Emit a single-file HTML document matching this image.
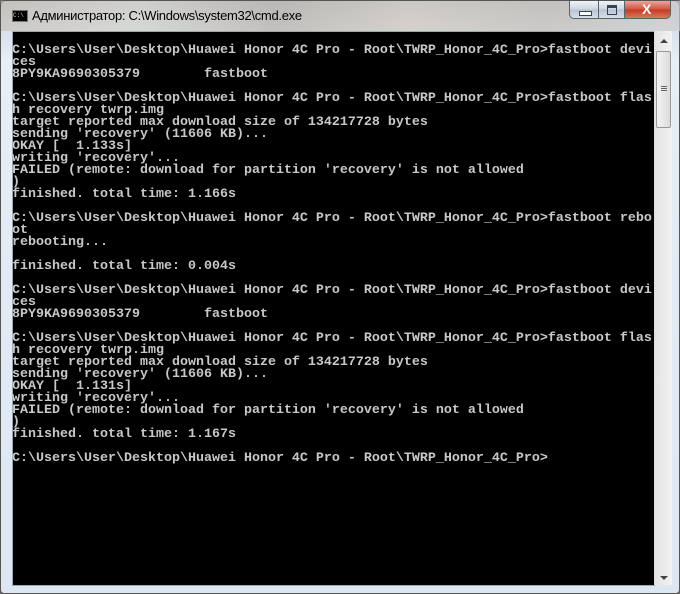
<!DOCTYPE html>
<html><head><meta charset="utf-8"><style>
html,body{margin:0;padding:0;width:680px;height:594px;overflow:hidden;background:#6a6a6a}
.win{position:absolute;left:0;top:0;width:678px;height:592px;border:1px solid #555;border-radius:6px 6px 4px 4px;
background:linear-gradient(180deg,rgba(200,210,220,.85) 0,rgba(222,232,243,.95) 30px,#e6eef7 60px,#dde7f2 100%)}
.tb{position:absolute;left:0;top:0;width:680px;height:30px;background:linear-gradient(90deg,#c9c2b8 0,#d8d4cc 20%,#b9b3ab 40%,#d4cbc1 60%,#c6c0b8 80%,#cfcfcf 100%);opacity:.7}
.title{position:absolute;left:31px;top:7px;font:13px "Liberation Sans","DejaVu Sans",sans-serif;color:#000;letter-spacing:-0.3px}
.icon{position:absolute;left:11px;top:9px;width:14px;height:10px;background:#000;border:1px solid #777;font:6px "Liberation Mono",monospace;color:#ccc;line-height:9px;overflow:hidden}
.btn{position:absolute;top:0;height:18px;border:1px solid #566;border-top:none;box-sizing:border-box;
background:linear-gradient(#f0f3f7,#cbd5e0 50%,#b7c3d1 51%,#d6e0ea)}
.min{left:568px;width:30px;border-radius:0 0 0 5px}
.max{left:597px;width:27px}
.cls{left:623px;width:47px;border-radius:0 0 5px 0;background:linear-gradient(#e8a79a,#d0533c 50%,#c23a22 51%,#d9785f)}
.con{position:absolute;left:11px;top:30px;width:642px;height:553px;background:#000;border:1px solid #9aa;border-right:none}
pre{margin:0;position:absolute;left:-1px;top:13px;font:bold 13.33px/12px "Liberation Mono",monospace;color:#c8c8c8;letter-spacing:0;white-space:pre}
.sb{position:absolute;left:653px;top:30px;width:17px;height:554px;background:linear-gradient(90deg,#e4e4e4,#f2f2f2);border-left:1px solid #ddd}
.thumb{position:absolute;left:1px;top:20px;width:13px;height:75px;border:1px solid #999;border-radius:2px;background:linear-gradient(90deg,#f3f3f3,#dcdcdc)}
.grip{position:absolute;left:4px;top:34px;width:6px;height:1px;background:#666;box-shadow:0 2px #666,0 4px #666}
.up,.dn{position:absolute;left:5px;width:0;height:0;border-left:4px solid transparent;border-right:4px solid transparent}
.up{top:8px;border-bottom:4px solid #444}.dn{top:545px;border-top:4px solid #444}
</style></head><body>
<div class="win">
<div class="tb"></div>
<div class="icon">C:\</div>
<div class="title">Администратор: C:\Windows\system32\cmd.exe</div>
<div class="btn min"><div style="position:absolute;left:9px;top:10px;width:11px;height:3px;background:#fff;border:1px solid #345"></div></div>
<div class="btn max"><div style="position:absolute;left:8px;top:4px;width:8px;height:6px;border:1px solid #345;border-top-width:3px;background:transparent"></div></div>
<div class="btn cls"><div style="position:absolute;left:17px;top:0;font:bold 14px 'Liberation Sans',sans-serif;color:#fff">X</div></div>
<div class="con"><pre>C:\Users\User\Desktop\Huawei Honor 4C Pro - Root\TWRP_Honor_4C_Pro>fastboot devi
ces
8PY9KA9690305379        fastboot

C:\Users\User\Desktop\Huawei Honor 4C Pro - Root\TWRP_Honor_4C_Pro>fastboot flas
h recovery twrp.img
target reported max download size of 134217728 bytes
sending 'recovery' (11606 KB)...
OKAY [  1.133s]
writing 'recovery'...
FAILED (remote: download for partition 'recovery' is not allowed
)
finished. total time: 1.166s

C:\Users\User\Desktop\Huawei Honor 4C Pro - Root\TWRP_Honor_4C_Pro>fastboot rebo
ot
rebooting...

finished. total time: 0.004s

C:\Users\User\Desktop\Huawei Honor 4C Pro - Root\TWRP_Honor_4C_Pro>fastboot devi
ces
8PY9KA9690305379        fastboot

C:\Users\User\Desktop\Huawei Honor 4C Pro - Root\TWRP_Honor_4C_Pro>fastboot flas
h recovery twrp.img
target reported max download size of 134217728 bytes
sending 'recovery' (11606 KB)...
OKAY [  1.131s]
writing 'recovery'...
FAILED (remote: download for partition 'recovery' is not allowed
)
finished. total time: 1.167s

C:\Users\User\Desktop\Huawei Honor 4C Pro - Root\TWRP_Honor_4C_Pro></pre></div>
<div class="sb"><div class="up"></div><div class="thumb"><div class="grip"></div></div><div class="dn"></div></div>
</div>
</body></html>
